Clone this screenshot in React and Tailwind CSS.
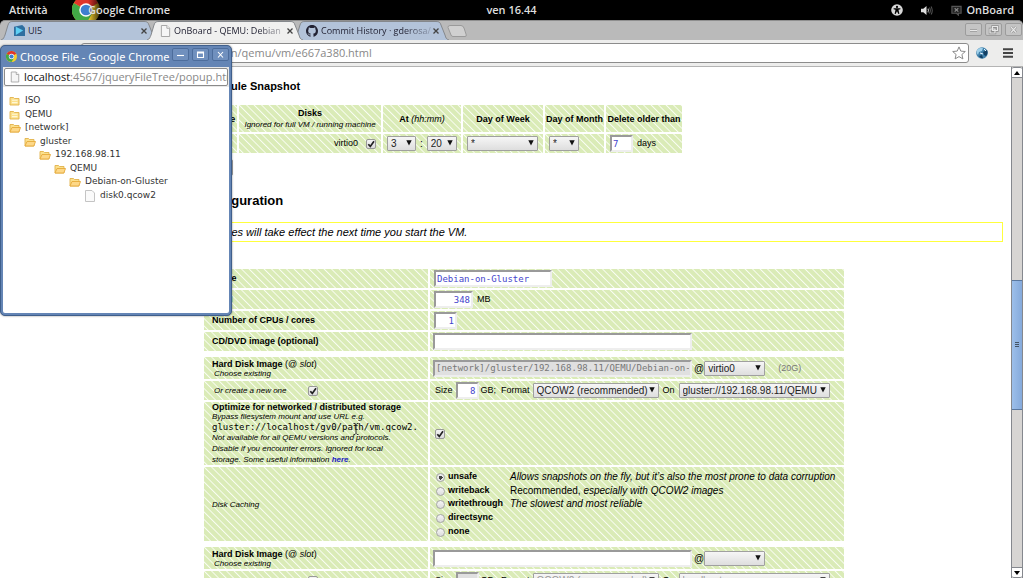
import React from "react";

const stripes =
  "bg-[repeating-linear-gradient(45deg,#f8fcf1_0%,#daebb7_5%,#daebb7_21%,#f8fcf1_25%)] bg-[length:15px_15px]";
const ui = "font-['Open_Sans','Noto_Sans',sans-serif]";
const mono = "font-['DejaVu_Sans_Mono',monospace]";
const inset =
  "border-2 border-t-[#9a9a9a] border-l-[#9a9a9a] border-b-[#eeeeee] border-r-[#eeeeee] rounded-none outline-none";

function Check({ label, ...props }) {
  return (
    <span className="relative inline-flex shrink-0">
      <input
        type="checkbox"
        aria-label={label}
        className="peer size-[10px] appearance-none rounded-[2px] border border-[#999] bg-gradient-to-b from-[#f4f4f4] to-[#dcdcdc]"
        {...props}
      />
      <svg viewBox="0 0 10 10" className="pointer-events-none absolute inset-0 hidden size-[10px] peer-checked:block">
        <path d="M2.3 5.2 L4.3 7.4 L8 2.2" fill="none" stroke="#222" strokeWidth="1.7" />
      </svg>
    </span>
  );
}

function Select({ value, label, width, options = [], disabled }) {
  return (
    <span className={`relative inline-flex shrink-0 ${width}`}>
      <select
        aria-label={label}
        defaultValue={value}
        disabled={disabled}
        className="h-[15px] w-full appearance-none rounded-[1px] border border-[#a0a0a0] bg-gradient-to-b from-[#f6f6f6] to-[#dedede] pl-[3px] text-[10px] leading-[13px] text-[#222] disabled:text-[#999]"
      >
        <option>{value}</option>
        {options.map((o) => (
          <option key={o}>{o}</option>
        ))}
      </select>
      <svg viewBox="0 0 6 6" className="pointer-events-none absolute right-[4px] top-[4px] size-[6px]">
        <path d="M0.3 0.3 H5.7 L3 5.6 Z" fill="#111" />
      </svg>
    </span>
  );
}

function Field({ label, className, ...props }) {
  return (
    <input
      type="text"
      aria-label={label}
      className={`${mono} ${inset} h-[17px] shrink-0 bg-white px-[1px] text-[9px] leading-[12px] text-[#4444cc] disabled:bg-[#e0e0e0] disabled:text-[#777] ${className}`}
      {...props}
    />
  );
}

function Tab({ active, title, icon, fade }) {
  return (
    <div className={`relative -mr-[10px] flex h-[19px] w-[156px] items-center pl-[13px] pr-[10px] ${active ? "z-10" : ""}`}>
      <svg className="absolute inset-0 h-full w-full" viewBox="0 0 156 19" preserveAspectRatio="none">
        <path
          d="M0 19 C3 18 3 16 4 14 L7 4 C8 1 9 .5 12 .5 L143 .5 C146 .5 147 1 148 4 L152 14 C153 17 153 18 156 19"
          fill={active ? "#f0f0ef" : "#b3c3d9"}
          stroke="#85888c"
          strokeWidth="1"
        />
      </svg>
      <span className="relative shrink-0">{icon}</span>
      <span
        className={`relative ml-[3px] min-w-0 flex-1 overflow-hidden whitespace-nowrap text-[9px] font-medium ${
          fade ? "[mask-image:linear-gradient(to_right,black_75%,rgba(0,0,0,0.2))]" : ""
        }`}
      >
        {title}
      </span>
      <button aria-label="Close tab" className="relative ml-[2px] shrink-0">
        <svg viewBox="0 0 6 6" className="size-[6px]">
          <path d="M.5 .5 L5.5 5.5 M5.5 .5 L.5 5.5" stroke="#444" strokeWidth="1.3" />
        </svg>
      </button>
    </div>
  );
}

function ChromeLogo({ className }) {
  return (
    <svg viewBox="0 0 24 24" className={className}>
      <circle cx="12" cy="12" r="12" fill="#f6cf2e" />
      <path d="M12 12 L1.6 6 A12 12 0 0 0 12 24 L17.2 15 Z" fill="#41a846" />
      <path d="M12 12 L1.6 6 A12 12 0 0 1 22.4 6 Z" fill="#e0342b" />
      <circle cx="12" cy="12" r="5.8" fill="#fff" />
      <circle cx="12" cy="12" r="4.6" fill="#3f7fd0" />
    </svg>
  );
}

function PageIcon({ className }) {
  return (
    <svg viewBox="0 0 12 13" className={className}>
      <path d="M1.5 .5 H7.5 L10.5 3.5 V12.5 H1.5 Z" fill="#f6f6f6" stroke="#a0a0a0" />
      <path d="M7.5 .5 V3.5 H10.5" fill="#fff" stroke="#a0a0a0" />
    </svg>
  );
}

function Folder({ open }) {
  return (
    <svg viewBox="0 0 12 10" className="h-[10px] w-[12px]">
      <path d="M1 9 V1.5 H4.5 L5.5 2.5 H10 V9 Z" fill="#fbe08c" stroke="#e2b24c" strokeWidth=".9" />
      {open ? (
        <path d="M1 9 L3 4.5 H11.5 L9.8 9 Z" fill="#fdd888" stroke="#e5aa3c" strokeWidth=".9" />
      ) : (
        <path d="M3 4.2 H8.5 M3 6.6 H8.5" stroke="#fff7d8" strokeWidth="1.1" />
      )}
    </svg>
  );
}

const files = [
  { name: "ISO", pad: "pl-[6px]" },
  { name: "QEMU", pad: "pl-[6px]" },
  { name: "[network]", pad: "pl-[6px]", open: true },
  { name: "gluster", pad: "pl-[21px]", open: true },
  { name: "192.168.98.11", pad: "pl-[36px]", open: true },
  { name: "QEMU", pad: "pl-[51px]", open: true },
  { name: "Debian-on-Gluster", pad: "pl-[66px]", open: true },
  { name: "disk0.qcow2", pad: "pl-[81px]", file: true },
];

const winPaths = {
  Minimize: "M3 6.5 H10",
  Maximize: "M3.5 3 H9.5 V8.5 H3.5 Z M3.5 4 H9.5",
  Restore: "M5.5 2.5 H10.5 V6.5 H5.5 Z M3 5 H8 V9 H3 Z",
  Close: "M4 3 L9 8.5 M9 3 L4 8.5",
};

function WinButton({ kind, dark }) {
  return (
    <button
      aria-label={kind}
      className={`flex h-[13px] w-[17px] items-center justify-center rounded-[2px] border ${
        dark ? "border-[#4d6d9c] bg-[#7090be]" : "border-[#9c9c9c] bg-[#c4c4c4]"
      }`}
    >
      <svg viewBox="0 0 13 11" className="h-[11px] w-[13px]">
        <path
          d={winPaths[kind]}
          fill="none"
          stroke={dark ? "#fff" : "#8c8c8c"}
          strokeWidth={dark ? "1.1" : "2.4"}
        />
        {!dark && <path d={winPaths[kind]} fill="none" stroke="#e8e8e8" strokeWidth="1.2" />}
      </svg>
    </button>
  );
}

function Popup() {
  return (
    <section
      aria-label="Choose File"
      className={`${ui} absolute left-0 top-[45px] z-30 flex h-[271px] w-[232px] flex-col rounded-[5px] border border-[#3f5f8c] bg-[#6485b5] px-[2px] pb-[2px] shadow-[0_0_2px_rgba(0,0,0,0.5)]`}
    >
      <header className="flex h-[21px] items-center pl-[3px]">
        <ChromeLogo className="size-[11px] shrink-0" />
        <h2 className="ml-[3px] flex-1 whitespace-nowrap font-['Noto_Sans',sans-serif] text-[11px] leading-[20px] text-white">
          Choose File - Google Chrome
        </h2>
        <div className="mb-[4px] flex gap-[3px]">
          <WinButton kind="Minimize" dark />
          <WinButton kind="Maximize" dark />
          <WinButton kind="Close" dark />
        </div>
      </header>
      <div className="flex h-[20px] bg-[#e9e9e8] p-px">
        <div className="flex w-full items-center overflow-hidden rounded-[2px] border border-[#8a8a8a] bg-white pl-[5px]">
          <PageIcon className="h-[12px] w-[10px] shrink-0" />
          <p className="ml-[4px] whitespace-nowrap text-[11px] text-[#888]">
            <span className="text-[#111]">localhost</span>:4567/jqueryFileTree/popup.htm
          </p>
        </div>
      </div>
      <ul className="flex-1 rounded-b-[2px] bg-white pt-[7px] font-['DejaVu_Sans',sans-serif] text-[9px] text-[#333]">
        {files.map((f, i) => (
          <li key={i} className={`flex items-center ${f.file ? "h-[14px]" : "h-[14px] [&:nth-child(even)]:h-[13px]"} ${f.pad}`}>
            {f.file ? (
              <svg viewBox="0 0 12 12" className="size-[12px]">
                <path d="M1.5 .5 H8 L10.5 3 V11.5 H1.5 Z" fill="#fafafa" stroke="#c4c4c4" />
              </svg>
            ) : (
              <Folder open={f.open} />
            )}
            <span className="ml-[4px]">{f.name}</span>
          </li>
        ))}
      </ul>
    </section>
  );
}

function TopBar() {
  return (
    <header className={`${ui} relative flex h-[20px] shrink-0 items-center bg-black text-[11px] font-semibold text-[#dedede]`}>
      <span className="w-[63px] pl-[9px]">Attività</span>
      <span className="relative ml-[9px] h-[20px] w-[32px] overflow-hidden [mask-image:linear-gradient(to_right,black_50%,transparent)]">
        <ChromeLogo className="absolute -top-[4px] left-0 size-[28px]" />
      </span>
      <span className="relative -ml-[16px]">Google Chrome</span>
      <time className="absolute left-1/2 -translate-x-1/2">ven 16.44</time>
      <div className="ml-auto flex items-center pr-[9px]">
        <svg viewBox="0 0 14 14" className="size-[12px]">
          <circle cx="7" cy="7" r="6.8" fill="#d8d8d8" />
          <circle cx="7" cy="3.4" r="1.3" />
          <path d="M3 5 L11 5 L11 6.2 L8.7 6.6 L9.8 11.5 L8.6 11.8 L7 8.4 L5.4 11.8 L4.2 11.5 L5.3 6.6 L3 6.2 Z" />
        </svg>
        <svg viewBox="0 0 14 12" className="ml-[17px] h-[11px] w-[13px]">
          <path d="M1 4 H3.5 L7 1 V11 L3.5 8 H1 Z" fill="#ddd" />
          <path d="M8.5 4 Q10 6 8.5 8" fill="none" stroke="#ccc" strokeWidth="1.1" />
          <path d="M10.2 2.8 Q12.2 6 10.2 9.2 M12 1.6 Q14.6 6 12 10.4" fill="none" stroke="#555" strokeWidth="1.1" />
        </svg>
        <svg viewBox="0 0 12 12" className="ml-[18px] size-[11px]">
          <path d="M1 1.5 H11 V9 H8 V11 L6 9 H1 Z" fill="#222" stroke="#555" strokeWidth="1.3" />
          <path d="M4 3.5 L8 7.2 M8 3.5 L4 7.2" stroke="#888" strokeWidth="1.3" />
        </svg>
        <span className="ml-[4px]">OnBoard</span>
      </div>
    </header>
  );
}

function BrowserChrome() {
  return (
    <div className={`${ui} shrink-0 bg-black`}>
      <div className="flex h-[20px] items-end rounded-t-[5px] border-t border-[#8f8f8f] bg-[#bababa] pl-[1px] text-[#223]">
        <Tab
          title="UI5"
          icon={
            <svg viewBox="0 0 12 12" className="size-[11px]">
              <path d="M0 2 L9 0 L12 3 V12 H0 Z" fill="#2f6fa0" />
              <path d="M2 2 L10 6 L2 11 Z" fill="#5fd0f4" />
            </svg>
          }
        />
        <Tab active fade title="OnBoard - QEMU: Debian" icon={<PageIcon className="h-[12px] w-[11px]" />} />
        <Tab
          fade
          title="Commit History · gderosa/"
          icon={
            <svg viewBox="0 0 16 16" className="size-[12px]" fill="#223">
              <path d="M8 0C3.58 0 0 3.58 0 8c0 3.54 2.29 6.53 5.47 7.59.4.07.55-.17.55-.38 0-.19-.01-.82-.01-1.49-2.01.37-2.53-.49-2.69-.94-.09-.23-.48-.94-.82-1.13-.28-.15-.68-.52-.01-.53.63-.01 1.08.58 1.23.82.72 1.21 1.87.87 2.33.66.07-.52.28-.87.51-1.07-1.78-.2-3.64-.89-3.64-3.95 0-.87.31-1.59.82-2.15-.08-.2-.36-1.02.08-2.12 0 0 .67-.21 2.2.82.64-.18 1.32-.27 2-.27s1.36.09 2 .27c1.53-1.04 2.2-.82 2.2-.82.44 1.1.16 1.92.08 2.12.51.56.82 1.27.82 2.15 0 3.07-1.87 3.75-3.65 3.95.29.25.54.73.54 1.48 0 1.07-.01 1.93-.01 2.2 0 .21.15.46.55.38A8.01 8.01 0 0 0 16 8c0-4.42-3.58-8-8-8z" />
            </svg>
          }
        />
        <button aria-label="New tab" className="mb-[3px] ml-[8px]">
          <svg viewBox="0 0 20 12" className="h-[12px] w-[20px]">
            <path d="M3 .5 H14 Q16 .5 17 3 L19.3 10 Q19.5 11.5 18 11.5 H6 Q4.500 11.5 4 10 L1 2.500 Q.8 .5 3 .5 Z" fill="#d0d0d0" stroke="#9a9a9a" />
          </svg>
        </button>
        <div className="mb-[4px] ml-auto flex gap-[3px] pr-[1px]">
          <WinButton kind="Minimize" />
          <WinButton kind="Restore" />
          <WinButton kind="Close" />
        </div>
      </div>
      <div className="flex h-[27px] items-center border-b border-[#b4b4b4] bg-[#ededec] pl-[81px] pr-[10px]">
        <div className="flex h-[20px] flex-1 items-center rounded-[3px] border border-[#8c8c8c] bg-white pr-[2px]">
          <PageIcon className="h-[12px] w-[11px] shrink-0" />
          <input
            aria-label="Address"
            defaultValue="localhost:4567/virtualization/qemu/vm/e667a380.html"
            className="min-w-0 flex-1 text-[11px] leading-[16px] text-[#888] outline-none"
          />
          <svg viewBox="0 0 14 14" className="size-[14px]">
            <path d="M7 .9 L8.8 5.1 L13.300 5.500 L9.900 8.500 L10.900 12.900 L7 10.600 L3.100 12.900 L4.100 8.500 L.7 5.500 L5.200 5.100 Z" fill="#fff" stroke="#8a8a8a" />
          </svg>
        </div>
        <svg viewBox="0 0 12 12" className="ml-[7px] size-[12px]">
          <circle cx="6" cy="6" r="5.8" fill="#3f80ab" />
          <path d="M1 3 Q4 0 7 1 L6 4 L3 5 L2 8 Q0 6 1 3 Z" fill="#9fd0ea" />
          <path d="M7 5 L11 3 Q12.500 6 10 9 L8 8 Z M3 9 L6 8 L7 11 Q5 12 3 9 Z" fill="#123f63" />
          <path d="M8 2 L10 4 M4 6 L7 7" stroke="#e8f6ff" />
        </svg>
        <button aria-label="Menu" className="ml-[15px]">
          <svg viewBox="0 0 10 10" className="size-[10px]">
            <path d="M0 1.200 H10 M0 5 H10 M0 8.800 H10" stroke="#444" strokeWidth="2" />
          </svg>
        </button>
      </div>
    </div>
  );
}

function ScrollBar() {
  return (
    <div className="flex w-[12px] shrink-0 flex-col border-x border-[#85888e] bg-[#d7d5d3]">
      <button aria-label="Scroll up" className="flex h-[11px] items-center justify-center rounded-t-[2px] border-y border-[#85888e] bg-white">
        <svg viewBox="0 0 6 4" className="h-[4px] w-[6px]"><path d="M0 4 L3 0 L6 4 Z" /></svg>
      </button>
      <div className="grow-[203] basis-0" />
      <div className="flex grow-[128] basis-0 flex-col items-center justify-center gap-px border-y border-[#5a789f] bg-gradient-to-r from-[#9cbfea] to-[#86aadb]">
        <i className="h-px w-[4px] bg-[#456]" />
        <i className="h-px w-[4px] bg-[#456]" />
        <i className="h-px w-[4px] bg-[#456]" />
      </div>
      <div className="grow-[158] basis-0" />
      <button aria-label="Scroll down" className="flex h-[11px] items-center justify-center rounded-b-[2px] border-y border-[#85888e] bg-white">
        <svg viewBox="0 0 6 4" className="h-[4px] w-[6px]"><path d="M0 0 L3 4 L6 0 Z" /></svg>
      </button>
    </div>
  );
}

const tableClass = "table-fixed border-separate border-spacing-[2px]";
const th = `${stripes} h-[27px] p-0 text-center text-[9px] font-bold leading-[12px]`;
const td = `${stripes} h-[19px] p-0`;
const labelCell = `${stripes} py-0 pr-0 pl-[8px] text-left align-middle text-[9px] font-normal leading-[11px]`;
const valueCell = `${stripes} py-0 pr-0 pl-[4px] align-middle`;

function Snapshot() {
  return (
    <table className={`${tableClass} w-[482px]`}>
      <colgroup>
        <col className="w-[33px]" />
        <col className="w-[142px]" />
        <col className="w-[78px]" />
        <col className="w-[80px]" />
        <col className="w-[59px]" />
        <col />
      </colgroup>
      <thead>
        <tr>
          <th className={th}>Enable</th>
          <th className={th}>
            Disks
            <em className="block whitespace-nowrap text-[8px] font-normal">Ignored for full VM / running machine</em>
          </th>
          <th className={th}>
            At <em className="font-normal">(hh:mm)</em>
          </th>
          <th className={th}>Day of Week</th>
          <th className={`${th} whitespace-nowrap`}>Day of Month</th>
          <th className={`${th} whitespace-nowrap`}>Delete older than</th>
        </tr>
      </thead>
      <tbody>
        <tr>
          <td className={td} />
          <td className={td}>
            <label className="flex items-center justify-end gap-[8px] pr-[5px] text-[9px]">
              virtio0 <Check defaultChecked />
            </label>
          </td>
          <td className={td}>
            <div className="flex items-center gap-[4px] pl-[4px] text-[10px] leading-[15px]">
              <Select label="Hour" value="3" width="w-[29px]" />:
              <Select label="Minute" value="20" width="w-[30px]" />
            </div>
          </td>
          <td className={`${td} pl-[4px]`}>
            <div className="flex">
              <Select label="Day of week" value="*" width="w-[71px]" />
            </div>
          </td>
          <td className={`${td} pl-[4px]`}>
            <div className="flex">
              <Select label="Day of month" value="*" width="w-[30px]" />
            </div>
          </td>
          <td className={td}>
            <label className="flex items-center gap-[4px] pl-[4px] text-[9px]">
              <Field label="Delete older than (days)" className="w-[23px]" defaultValue="7" />
              days
            </label>
          </td>
        </tr>
      </tbody>
    </table>
  );
}

function Row({ label, height = "h-[19px]", children }) {
  return (
    <tr>
      <th scope="row" className={`${labelCell} ${height}`}>{label}</th>
      <td className={`${valueCell} ${height}`}>{children}</td>
    </tr>
  );
}

function FormTable({ children }) {
  return (
    <table className={`${tableClass} w-[644px]`}>
      <colgroup>
        <col className="w-[224px]" />
        <col />
      </colgroup>
      <tbody>{children}</tbody>
    </table>
  );
}

function DiskRows({ path, slot, note, size, target, disabled, created }) {
  return (
    <>
      <Row
        height="h-[22px]"
        label={
          <div className="pt-[2px] leading-[10px]">
            <span className="font-bold">Hard Disk Image</span> (@ <em>slot</em>)
            <em className="block pl-[2px] text-[8px]">Choose existing</em>
          </div>
        }
      >
        <div className="-ml-px flex items-center text-[10px] leading-[15px]">
          <Field label="Disk image path" className="w-[259px]" defaultValue={path} disabled={created} />
          <span className="ml-[2px]">@</span>
          <Select label="Slot" value={slot} width="w-[61px]" />
          <span className="ml-[13px] text-[9px] text-[#777]">{note}</span>
        </div>
      </Row>
      <Row
        label={
          <label className="flex items-center gap-[22px] pl-[2px] text-[8px] italic">
            Or create a new one <Check defaultChecked={created} />
          </label>
        }
      >
        <div className="flex items-center pl-px text-[9px] leading-[15px]">
          Size
          <Field label="Size in GB" className="ml-[3px] mr-[2px] w-[23px] text-right" defaultValue={size} disabled={disabled} />
          GB;&nbsp; Format
          <span className="w-[3px]" />
          <Select label="Format" value="QCOW2 (recommended)" width="w-[126px]" disabled={disabled} />
          <span className="mx-[4px]">On</span>
          <Select label="Storage" value={target} width="w-[151px]" disabled={disabled} />
        </div>
      </Row>
    </>
  );
}

const modes = [
  ["unsafe", <em>Allows snapshots on the fly, but it’s also the most prone to data corruption</em>],
  ["writeback", <>Recommended, <em>especially with QCOW2 images</em></>],
  ["writethrough", <em>The slowest and most reliable</em>],
  ["directsync", null],
  ["none", null],
];

function Page() {
  return (
    <main className="min-w-0 flex-1 overflow-hidden bg-white pl-[198px] pr-[8px] text-black">
      <h3 className="mt-[13px] text-[11px] font-bold leading-[13px]">Schedule Snapshot</h3>
      <div className="ml-[4px] mt-[10px]">
        <Snapshot />
      </div>
      <button className="ml-[4px] mt-[4px] block h-[17px] w-[31px] rounded-[2px] border border-[#a0a0a0] bg-gradient-to-b from-[#f6f6f6] to-[#dedede] text-[9px]">
        Save
      </button>
      <h2 className="mt-[16px] text-[13px] font-bold leading-[18px]">Configuration</h2>
      <p className="mt-[12px] border border-[#ffff3c] text-[11px] italic leading-[18px]">
        Changes will take effect the next time you start the VM.
      </p>
      <form className="ml-[4px] mt-[25px] flex flex-col gap-[2px]">
        <FormTable>
          <Row label={<b>Name</b>}>
            <Field label="Name" className="block w-[118px]" defaultValue="Debian-on-Gluster" />
          </Row>
          <Row label={<b>RAM</b>}>
            <label className="flex items-center gap-[4px] text-[9px]">
              <Field label="RAM" className="w-[39px] text-right" defaultValue="348" /> MB
            </label>
          </Row>
          <Row label={<b>Number of CPUs / cores</b>}>
            <Field label="Number of CPUs" className="block w-[23px] text-right" defaultValue="1" />
          </Row>
          <Row label={<b>CD/DVD image (optional)</b>}>
            <Field label="CD/DVD image" className="-ml-px block w-[259px]" />
          </Row>
        </FormTable>
        <FormTable>
          <DiskRows
            created
            path="[network]/gluster/192.168.98.11/QEMU/Debian-on-Gluster/disk0.qcow2"
            slot="virtio0"
            note="(20G)"
            size="8"
            target="gluster://192.168.98.11/QEMU"
          />
          <Row
            height="h-[63px]"
            label={
              <div className="relative leading-[10px]">
                <b>Optimize for networked / distributed storage</b>
                <p className="text-[8px] italic">Bypass filesystem mount and use URL e.g.</p>
                <p className={`${mono} whitespace-nowrap text-[9px]`}>gluster://localhost/gv0/path/vm.qcow2.</p>
                <p className="text-[8px] italic leading-[11px]">
                  Not available for all QEMU versions and protocols.
                  <br />
                  Disable if you encounter errors. Ignored for local
                  <br />
                  storage. Some useful information{" "}
                  <a href="#info" className="font-bold text-[#1a1ac0]">here</a>.
                </p>
                <svg viewBox="0 0 6 12" className="absolute left-[141px] top-[21px] h-[12px] w-[6px]">
                  <path d="M.5 .5 H2 L3 1.500 L4 .5 H5.500 M3 1.500 V10.500 M.5 11.500 H2 L3 10.500 L4 11.500 H5.500" fill="none" stroke="#333" />
                </svg>
              </div>
            }
          >
            <div className="flex pl-px">
              <Check label="Optimize for networked storage" defaultChecked />
            </div>
          </Row>
          <Row height="h-[74px]" label={<em className="text-[8px]">Disk Caching</em>}>
            <div className="grid h-[68px] grid-rows-5 pl-[2px]">
              {modes.map(([name, text], i) => (
                <div key={name} className="flex items-center leading-[13px]">
                  <label className="flex w-[74px] shrink-0 items-center gap-[3px] text-[9px] font-bold">
                    <input
                      type="radio"
                      name="cache"
                      defaultChecked={i === 0}
                      className="mt-[2px] size-[9px] appearance-none rounded-full border border-[#a5a5a5] bg-gradient-to-b from-[#f6f6f6] to-[#dcdcdc] checked:bg-[radial-gradient(circle,#444_0_2px,#eaeaea_2px)]"
                    />
                    {name}
                  </label>
                  <span className="whitespace-nowrap text-[10px]">{text}</span>
                </div>
              ))}
            </div>
          </Row>
        </FormTable>
        <FormTable>
          <DiskRows disabled slot="" path="" size="" target="localhost" />
        </FormTable>
      </form>
    </main>
  );
}

export default function App() {
  return (
    <div className="relative flex h-screen flex-col overflow-hidden font-['Liberation_Sans',sans-serif]">
      <TopBar />
      <BrowserChrome />
      <div className="flex min-h-0 flex-1">
        <Page />
        <ScrollBar />
      </div>
      <Popup />
    </div>
  );
}
